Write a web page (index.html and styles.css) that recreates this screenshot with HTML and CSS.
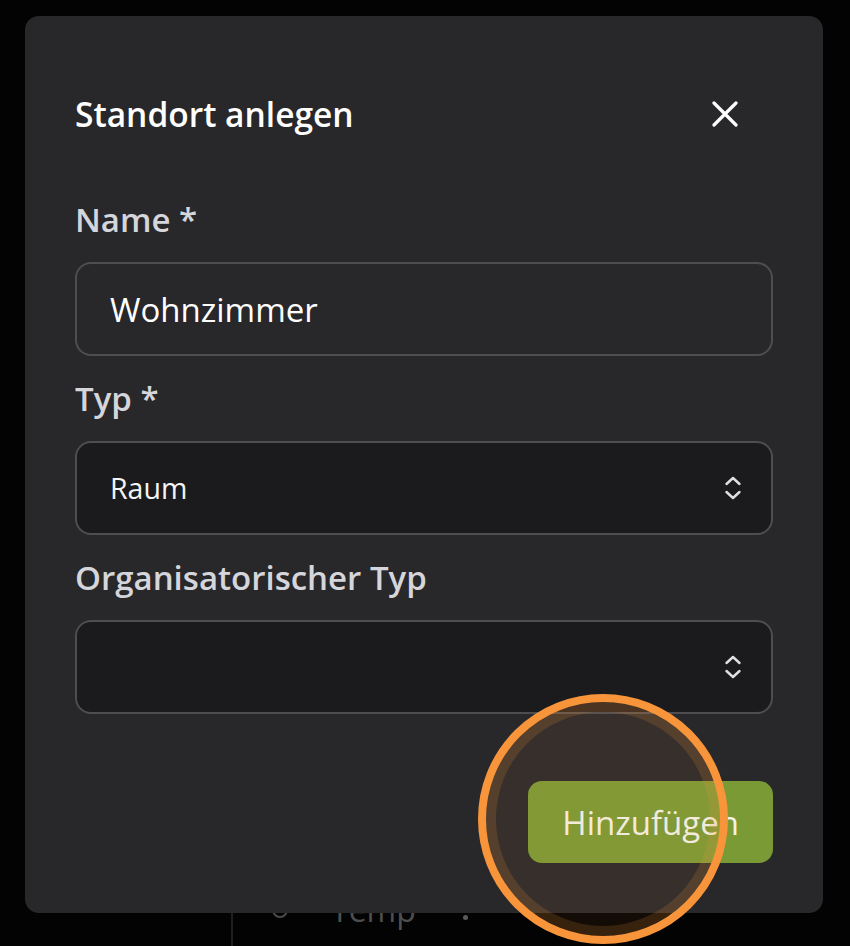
FILE: index.html
```html
<!DOCTYPE html>
<html lang="de">
<head>
<meta charset="utf-8">
<title>Standort anlegen</title>
<link rel="stylesheet" href="styles.css">
</head>
<body>
<div class="page">
  <aside class="sidebar"></aside>
  <main class="content">
    <div class="list">
      <div class="list-row">
        <svg class="row-icon" width="18" height="18" viewBox="0 0 18 18"><circle cx="9" cy="9" r="7" fill="none" stroke="#4a4a4a" stroke-width="2"/><circle cx="9" cy="9" r="2.5" fill="#4a4a4a"/></svg>
        <span class="row-text">Temp</span>
        <span class="row-dot"></span>
      </div>
    </div>
  </main>
</div>

<div class="modal">
  <div class="modal-head">
    <h2 class="modal-title">Standort anlegen</h2>
    <button class="close-btn" aria-label="Schließen">
      <svg width="26" height="26" viewBox="0 0 26 26"><path d="M2 2 L24 24 M24 2 L2 24" stroke="#ffffff" stroke-width="3.2" stroke-linecap="round" fill="none"/></svg>
    </button>
  </div>

  <div class="field">
    <label class="field-label">Name *</label>
    <div class="text-input">Wohnzimmer</div>
  </div>

  <div class="field">
    <label class="field-label">Typ *</label>
    <div class="select-input">
      <span class="select-value">Raum</span>
      <svg class="chevrons" width="18" height="24" viewBox="0 0 18 24"><path d="M2.5 8 L9 2 L15.5 8 M2.5 16 L9 22 L15.5 16" stroke="#e0e0e4" stroke-width="2.4" stroke-linecap="round" stroke-linejoin="round" fill="none"/></svg>
    </div>
  </div>

  <div class="field">
    <label class="field-label">Organisatorischer Typ</label>
    <div class="select-input">
      <span class="select-value"></span>
      <svg class="chevrons" width="18" height="24" viewBox="0 0 18 24"><path d="M2.5 8 L9 2 L15.5 8 M2.5 16 L9 22 L15.5 16" stroke="#e0e0e4" stroke-width="2.4" stroke-linecap="round" stroke-linejoin="round" fill="none"/></svg>
    </div>
  </div>

  <div class="actions">
    <button class="primary-btn">Hinzufügen</button>
  </div>
</div>

<div class="touch-ring"></div>
</body>
</html>
```

FILE: styles.css
```css
* { box-sizing: border-box; }

html, body {
  margin: 0;
  padding: 0;
}

body {
  width: 850px;
  height: 946px;
  overflow: hidden;
  background: #030303;
  font-family: "Open Sans", "Noto Sans", sans-serif;
  position: relative;
}

.page {
  display: flex;
  height: 946px;
}

.sidebar {
  width: 231px;
  flex: none;
}

.content {
  flex: 1;
  padding-top: 860px;
}

.list {
  border-left: 2px solid #1e1e1e;
  padding-top: 28px;
  height: 86px;
}

.list-row {
  display: flex;
  align-items: center;
  height: 44px;
  padding-left: 38px;
}

.row-icon {
  flex: none;
}

.row-text {
  margin-left: 42px;
  font-size: 32px;
  line-height: 44px;
  color: #4e4e4e;
}

.row-dot {
  width: 5px;
  height: 5px;
  border-radius: 50%;
  background: #5a5a5a;
  margin-left: 47px;
  margin-top: 14px;
}

.modal {
  position: absolute;
  left: 25px;
  top: 16px;
  width: 798px;
  background: #28282a;
  border-radius: 14px;
  padding: 78px 50px 50px;
  display: flex;
  flex-direction: column;
}

.modal-head {
  display: flex;
  align-items: center;
  justify-content: space-between;
  height: 40px;
  margin-bottom: 66px;
}

.modal-title {
  margin: 0;
  font-size: 33.5px;
  line-height: 40px;
  font-weight: 600;
  color: #ffffff;
}

.close-btn {
  width: 96px;
  height: 40px;
  padding: 0;
  border: 0;
  background: none;
  display: flex;
  align-items: center;
  justify-content: center;
}

.field {
  display: flex;
  flex-direction: column;
  margin-bottom: 23px;
}

.field-label {
  font-size: 33px;
  line-height: 40px;
  font-weight: 600;
  color: #d5d5dc;
  margin-bottom: 22px;
}

.text-input,
.select-input {
  height: 94px;
  border: 2px solid #4d4d52;
  border-radius: 16px;
  display: flex;
  align-items: center;
  padding: 0 29px 0 33px;
}

.text-input {
  background: #28282a;
  font-size: 33px;
  color: #ffffff;
}

.select-input {
  background: #1b1b1d;
  justify-content: space-between;
}

.select-value {
  font-size: 28.5px;
  color: #f4f4f6;
}

.chevrons {
  flex: none;
}

.actions {
  display: flex;
  justify-content: flex-end;
  margin-top: 44px;
}

.primary-btn {
  height: 82px;
  padding: 0 34px;
  border: 0;
  border-radius: 14px;
  background: #7a9a36;
  color: #f3f3e8;
  font-family: "Open Sans", "Noto Sans", sans-serif;
  font-size: 33px;
  font-weight: 400;
}

.touch-ring {
  position: absolute;
  left: 478px;
  top: 694px;
  width: 250px;
  height: 250px;
  border-radius: 50%;
  border: 8px solid #f8953b;
  background: rgba(247, 148, 58, 0.07);
  box-shadow: inset 0 0 0 10px rgba(247, 148, 58, 0.16);
  pointer-events: none;
}
```
